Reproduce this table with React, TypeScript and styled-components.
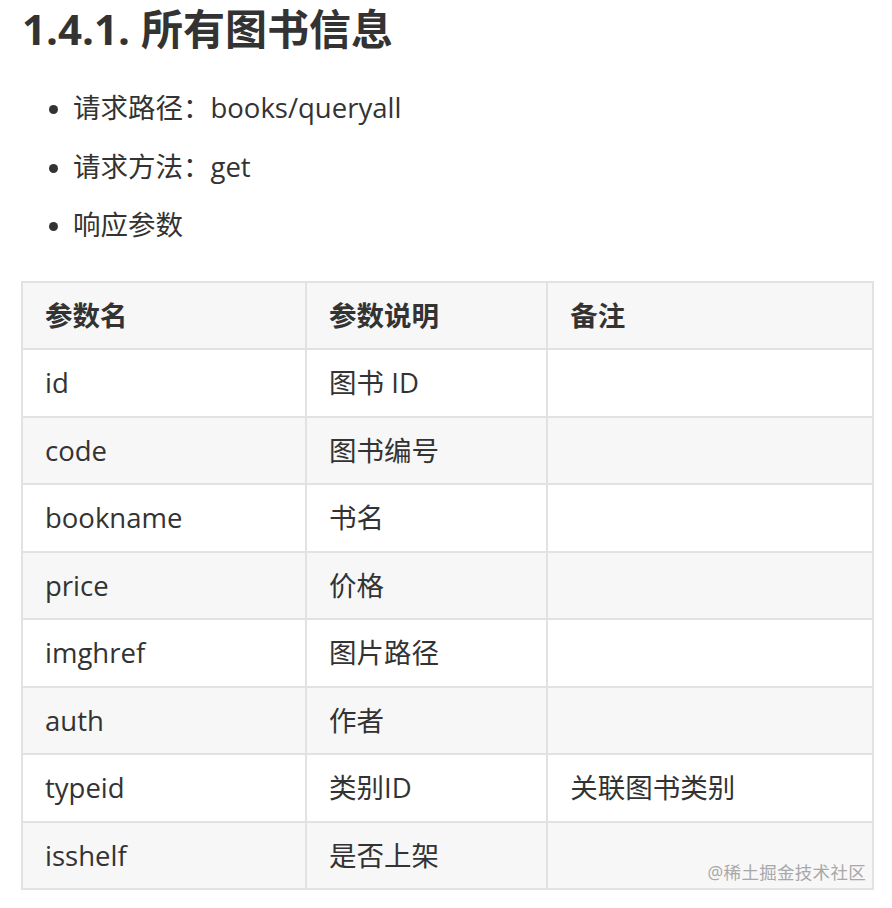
import React from "react";
import styled, { createGlobalStyle } from "styled-components";

const GlobalStyle = createGlobalStyle`
  body {
    margin: 0;
    background: #ffffff;
    font-family: "Open Sans", "Noto Sans CJK SC", sans-serif;
    color: #333333;
  }
`;

const Page = styled.div`
  position: relative;
  width: 892px;
  height: 908px;
  padding: 4px 0 0 21px;
  box-sizing: border-box;
  overflow: hidden;
`;

const Heading = styled.h2`
  margin: 0;
  font-size: 42px;
  line-height: 50px;
  font-weight: 700;
  color: #333333;
  padding-left: 1px;
`;

const List = styled.ul`
  margin: 25px 0 0 0;
  padding: 0 0 0 52px;
  list-style: disc;
`;

const Item = styled.li`
  font-size: 27.5px;
  line-height: 58.5px;
  &::marker {
    font-size: 24px;
  }
`;

const Table = styled.table`
  margin-top: 26px;
  width: 853px;
  border-collapse: collapse;
  font-size: 27.5px;
`;

const Row = styled.tr<{ $shaded: boolean }>`
  background: ${(p) => (p.$shaded ? "#f7f7f7" : "#ffffff")};
`;

const HeadCell = styled.th<{ $w: number }>`
  width: ${(p) => p.$w}px;
  text-align: left;
  font-weight: 700;
  border: 2px solid #e0e2e4;
  padding: 0 22px;
  height: 65.5px;
  line-height: 65.5px;
`;

const Cell = styled.td`
  border: 2px solid #e0e2e4;
  padding: 0 22px;
  height: 65.5px;
  line-height: 65.5px;
  white-space: nowrap;
`;

const Watermark = styled.div`
  position: absolute;
  right: 26px;
  bottom: 24px;
  font-size: 17.5px;
  color: #a8a8a8;
  letter-spacing: 0.3px;
`;

const rows: [string, string, string][] = [
  ["id", "图书 ID", ""],
  ["code", "图书编号", ""],
  ["bookname", "书名", ""],
  ["price", "价格", ""],
  ["imghref", "图片路径", ""],
  ["auth", "作者", ""],
  ["typeid", "类别ID", "关联图书类别"],
  ["isshelf", "是否上架", ""],
];

const App = () => {
  return (
    <Page>
      <GlobalStyle />
      <Heading>1.4.1. 所有图书信息</Heading>
      <List>
        <Item>请求路径：books/queryall</Item>
        <Item>请求方法：get</Item>
        <Item>响应参数</Item>
      </List>
      <Table>
        <thead>
          <Row $shaded={true}>
            <HeadCell $w={285}>参数名</HeadCell>
            <HeadCell $w={235}>参数说明</HeadCell>
            <HeadCell $w={333}>备注</HeadCell>
          </Row>
        </thead>
        <tbody>
          {rows.map((r, i) => (
            <Row key={r[0]} $shaded={i % 2 === 1}>
              <Cell>{r[0]}</Cell>
              <Cell>{r[1]}</Cell>
              <Cell>{r[2]}</Cell>
            </Row>
          ))}
        </tbody>
      </Table>
      <Watermark>@稀土掘金技术社区</Watermark>
    </Page>
  );
};

export default App;
